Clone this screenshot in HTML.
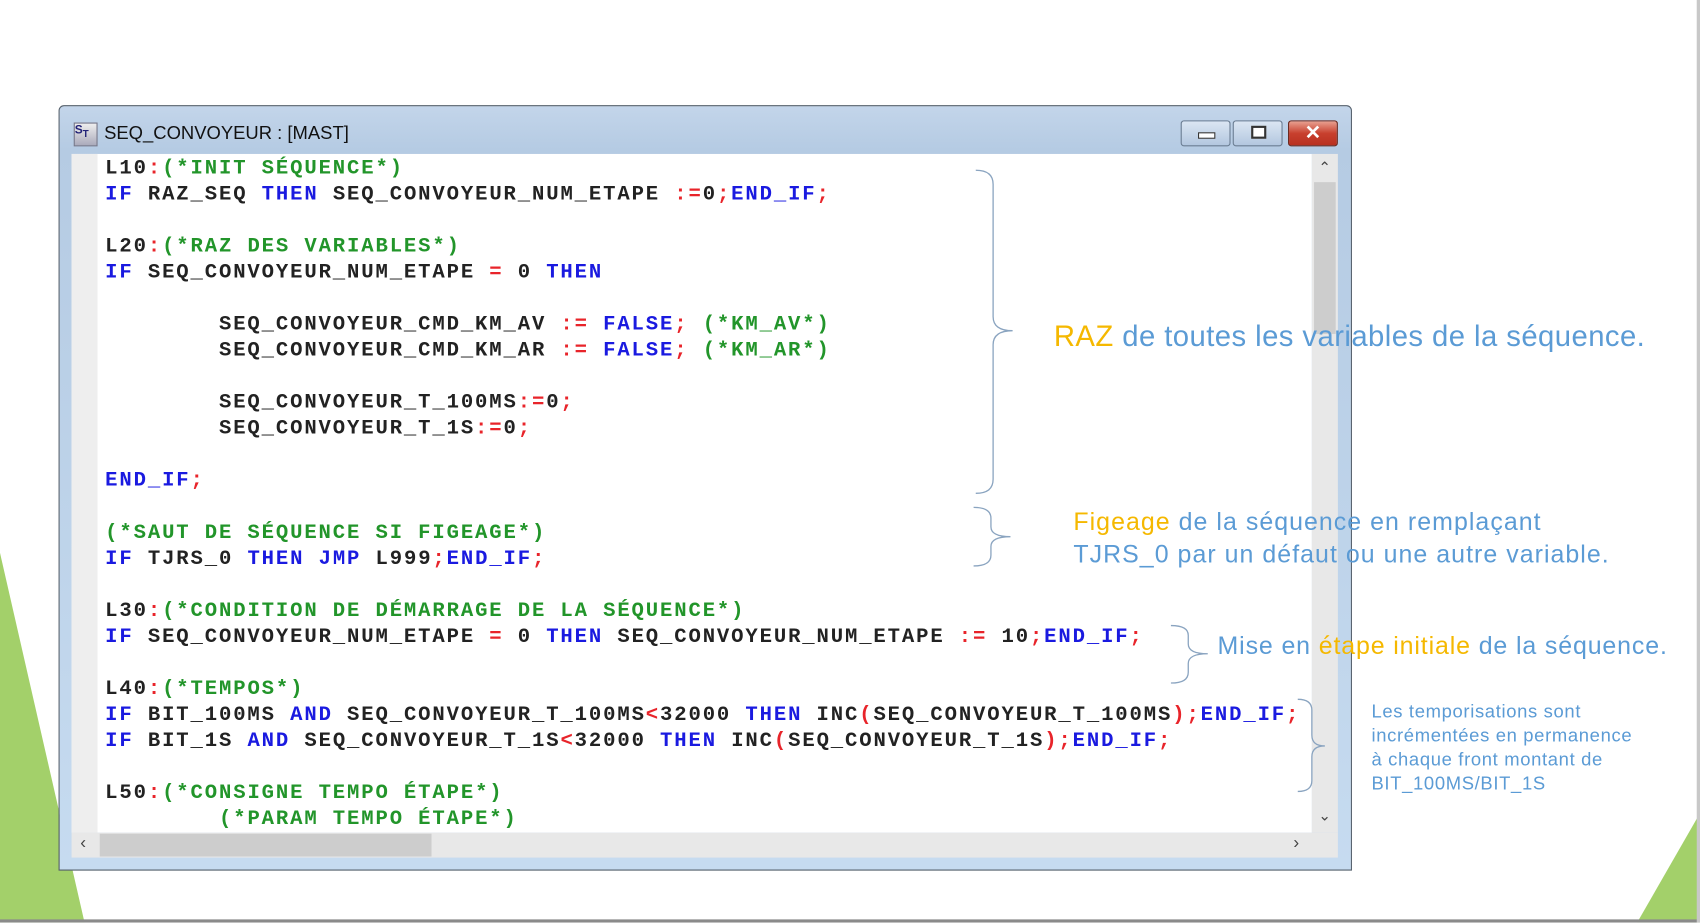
<!DOCTYPE html>
<html><head><meta charset="utf-8">
<style>
html,body{margin:0;padding:0;background:#fff;overflow:hidden}
body{width:1700px;height:923px;position:relative}
#s{position:absolute;left:0;top:0;width:1568px;height:851px;transform:scale(1.08418);transform-origin:0 0;font-family:"Liberation Sans",sans-serif}
.a{position:absolute}
.win{left:54px;top:97px;width:1193px;height:706px;background:linear-gradient(#c3d5ea,#b5cbe3 40px,#c6dbf0);border:1px solid #55606c;border-radius:5px 5px 0 0;box-sizing:border-box}
.code{left:66px;top:142px;width:1144px;height:626px;background:#fff;overflow:hidden}
.gut{left:66px;top:142px;width:24px;height:626px;background:#eeeeee}
pre{margin:0;position:absolute;left:97px;top:143px;font-family:"Liberation Mono",monospace;font-size:19px;line-height:24px;letter-spacing:1.72px;color:#222;font-weight:bold}
.k{color:#1a1ae0}.c{color:#22952a}.o{color:#e8242a}
.vs{left:1210px;top:142px;width:24px;height:626px;background:#e8e8e8}
.hs{left:66px;top:768px;width:1168px;height:23px;background:#e8e8e8}
.btn{top:111px;height:24px;border:1px solid #6b7d92;border-radius:3px;box-sizing:border-box}
.t{color:#5b9bd5}.y{color:#f5b800}
</style></head><body><div id="s">
<svg class="a" style="left:0;top:0" width="1568" height="851">
<polygon points="0,510 0,851 78,851" fill="#a3d06a"/>
<polygon points="1568,750 1568,851 1510,851" fill="#a3d06a"/>
<rect x="0" y="848" width="1568" height="3" fill="#8a8a8a"/>
<rect x="1565" y="0" width="3" height="851" fill="#c8c8c8"/>
</svg>
<div class="a win"></div>
<div class="a" style="left:68px;top:113px;width:20px;height:20px;background:linear-gradient(#eee,#aab);border:1px solid #778;font-size:11px;font-weight:bold;color:#227">S<sub style="font-size:9px">T</sub></div>
<div class="a" style="left:96px;top:113px;font-size:17px;color:#111">SEQ_CONVOYEUR : [MAST]</div>
<div class="a btn" style="left:1089px;width:46px;background:linear-gradient(#dbe6f3,#b3c7df)"><div class="a" style="left:15px;top:10px;width:14px;height:4px;border:1px solid #333;background:#fff"></div></div>
<div class="a btn" style="left:1137px;width:46px;background:linear-gradient(#dbe6f3,#b3c7df)"><div class="a" style="left:16px;top:4px;width:10px;height:8px;border:2px solid #333;background:#fff"></div></div>
<div class="a btn" style="left:1188px;width:46px;background:linear-gradient(#e8a090,#c8402e 50%,#b83020);color:#fff;font-weight:bold;font-size:18px;text-align:center;line-height:20px;border-color:#6b2a20">✕</div>
<div class="a code"></div>
<div class="a gut"></div>
<div class="a vs"><div class="a" style="left:2px;top:26px;width:20px;height:140px;background:#cdcdcd"></div><div class="a" style="left:6px;top:4px;font-size:14px;color:#444">&#8963;</div><div class="a" style="left:6px;top:602px;font-size:14px;color:#444">&#8964;</div></div>
<div class="a hs"><div class="a" style="left:26px;top:1px;width:306px;height:21px;background:#cdcdcd"></div><div class="a" style="left:8px;top:1px;font-size:16px;color:#444">&lsaquo;</div><div class="a" style="left:1127px;top:1px;font-size:16px;color:#444">&rsaquo;</div></div>
<pre>L10<span class="o">:</span><span class="c">(*INIT SÉQUENCE*)</span>
<span class="k">IF</span> RAZ_SEQ <span class="k">THEN</span> SEQ_CONVOYEUR_NUM_ETAPE <span class="o">:=</span>0<span class="o">;</span><span class="k">END_IF</span><span class="o">;</span>

L20<span class="o">:</span><span class="c">(*RAZ DES VARIABLES*)</span>
<span class="k">IF</span> SEQ_CONVOYEUR_NUM_ETAPE <span class="o">=</span> 0 <span class="k">THEN</span>

        SEQ_CONVOYEUR_CMD_KM_AV <span class="o">:=</span> <span class="k">FALSE</span><span class="o">;</span> <span class="c">(*KM_AV*)</span>
        SEQ_CONVOYEUR_CMD_KM_AR <span class="o">:=</span> <span class="k">FALSE</span><span class="o">;</span> <span class="c">(*KM_AR*)</span>

        SEQ_CONVOYEUR_T_100MS<span class="o">:=</span>0<span class="o">;</span>
        SEQ_CONVOYEUR_T_1S<span class="o">:=</span>0<span class="o">;</span>

<span class="k">END_IF</span><span class="o">;</span>

<span class="c">(*SAUT DE SÉQUENCE SI FIGEAGE*)</span>
<span class="k">IF</span> TJRS_0 <span class="k">THEN</span> <span class="k">JMP</span> L999<span class="o">;</span><span class="k">END_IF</span><span class="o">;</span>

L30<span class="o">:</span><span class="c">(*CONDITION DE DÉMARRAGE DE LA SÉQUENCE*)</span>
<span class="k">IF</span> SEQ_CONVOYEUR_NUM_ETAPE <span class="o">=</span> 0 <span class="k">THEN</span> SEQ_CONVOYEUR_NUM_ETAPE <span class="o">:=</span> 10<span class="o">;</span><span class="k">END_IF</span><span class="o">;</span>

L40<span class="o">:</span><span class="c">(*TEMPOS*)</span>
<span class="k">IF</span> BIT_100MS <span class="k">AND</span> SEQ_CONVOYEUR_T_100MS<span class="o">&lt;</span>32000 <span class="k">THEN</span> INC<span class="o">(</span>SEQ_CONVOYEUR_T_100MS<span class="o">);</span><span class="k">END_IF</span><span class="o">;</span>
<span class="k">IF</span> BIT_1S <span class="k">AND</span> SEQ_CONVOYEUR_T_1S<span class="o">&lt;</span>32000 <span class="k">THEN</span> INC<span class="o">(</span>SEQ_CONVOYEUR_T_1S<span class="o">);</span><span class="k">END_IF</span><span class="o">;</span>

L50<span class="o">:</span><span class="c">(*CONSIGNE TEMPO ÉTAPE*)</span>
        <span class="c">(*PARAM TEMPO ÉTAPE*)</span></pre>
<svg class="a" style="left:0;top:0" width="1568" height="851" fill="none" stroke="#8aa4c0" stroke-width="1.2">
<path d="M900,157 Q916,157 916,170 L916,292 Q916,305 934,305 Q916,305 916,318 L916,442 Q916,455 900,455"/>
<path d="M898,468 Q914,468 914,478 L914,486 Q914,495 932,495 Q914,495 914,504 L914,512 Q914,522 898,522"/>
<path d="M1080,577 Q1096,577 1096,586 L1096,594 Q1096,603 1114,603 Q1096,603 1096,612 L1096,620 Q1096,630 1080,630"/>
<path d="M1197,645 Q1210,645 1210,655 L1210,678 Q1210,688 1222,688 Q1210,688 1210,698 L1210,720 Q1210,730 1197,730"/>
</svg>
<div class="a t" style="left:972px;top:295px;font-size:27px;letter-spacing:0.4px;white-space:nowrap"><span class="y">RAZ</span> de toutes les variables de la séquence.</div>
<div class="a t" style="left:990px;top:466px;font-size:23px;line-height:30px;letter-spacing:0.95px;white-space:nowrap"><span class="y">Figeage</span> de la séquence en remplaçant<br>TJRS_0 par un défaut ou une autre variable.</div>
<div class="a t" style="left:1123px;top:582px;font-size:23px;letter-spacing:0.8px;white-space:nowrap">Mise en <span class="y">étape initiale</span> de la séquence.</div>
<div class="a t" style="left:1265px;top:646px;font-size:17px;line-height:22px;letter-spacing:0.6px;white-space:nowrap">Les temporisations sont<br>incrémentées en permanence<br>à chaque front montant de<br>BIT_100MS/BIT_1S</div>
</div></body></html>
